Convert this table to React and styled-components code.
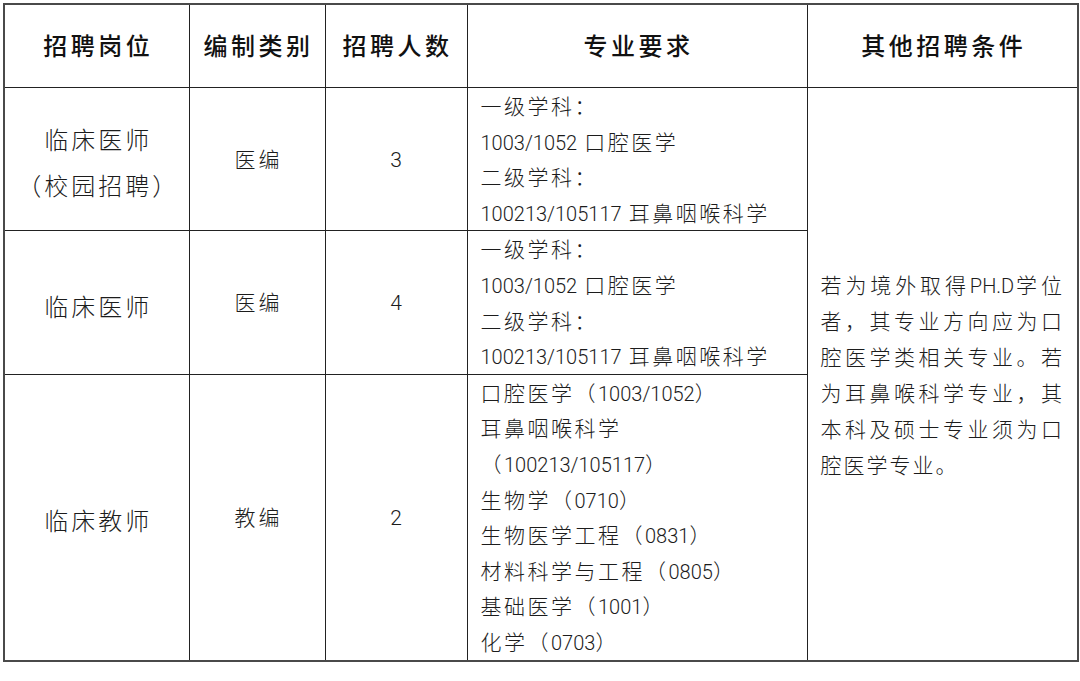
import styled, { createGlobalStyle } from "styled-components";

const GlobalStyle = createGlobalStyle`
  body {
    margin: 0;
    background: #fff;
    font-family: "Noto Sans CJK SC", "Noto Sans", sans-serif;
    color: #1c1c1c;
  }
`;

const Page = styled.div`
  padding: 3px 3px 0 3px;
  width: 1074px;
`;

const Table = styled.table`
  width: 1074px;
  border-collapse: collapse;
  table-layout: fixed;
  border: 2px solid #4a4a4a;
`;

const HeadCell = styled.th`
  height: 79px;
  border: 1px solid #222;
  font-size: 24px;
  font-weight: 500;
  letter-spacing: 3.5px;
  padding: 0 0 3px 3px;
  text-align: center;
  vertical-align: middle;
  color: #111;
`;

const Cell = styled.td`
  border: 1px solid #222;
  padding: ${({ $pad }) => $pad || "0"};
  text-align: ${({ $align }) => $align || "center"};
  vertical-align: middle;
  font-size: ${({ $size }) => $size || "21px"};
  font-weight: 300;
  letter-spacing: ${({ $spacing }) => $spacing || "2.5px"};
`;

const Line = styled.div`
  white-space: nowrap;
  height: ${({ $h }) => $h || "35.6px"};
  line-height: ${({ $h }) => $h || "35.6px"};
`;

const JustLine = styled.div`
  height: 36px;
  line-height: 36px;
  text-align: justify;
  text-align-last: ${({ $last }) => ($last ? "left" : "justify")};
  white-space: nowrap;
`;

const Num = styled.span`
  font-family: Roboto, "Liberation Sans", sans-serif;
  font-weight: 300;
  letter-spacing: 0;
  font-size: 20px;
  line-height: 1;
`;

const Count = styled.span`
  font-family: Roboto, "Liberation Sans", sans-serif;
  font-weight: 300;
  font-size: 21px;
  letter-spacing: 0;
`;

const rich = (s) =>
  s.split(/([0-9][0-9/.]*|PH\.D)/).map((part, i) =>
    i % 2 === 1 ? <Num key={i}>{part}</Num> : part
  );

const subjects = [
  "一级学科：",
  "1003/1052 口腔医学",
  "二级学科：",
  "100213/105117 耳鼻咽喉科学",
];

const teacherSubjects = [
  "口腔医学（1003/1052）",
  "耳鼻咽喉科学",
  "（100213/105117）",
  "生物学（0710）",
  "生物医学工程（0831）",
  "材料科学与工程（0805）",
  "基础医学（1001）",
  "化学（0703）",
];

const conditions = [
  "若为境外取得PH.D学位",
  "者，其专业方向应为口",
  "腔医学类相关专业。若",
  "为耳鼻喉科学专业，其",
  "本科及硕士专业须为口",
  "腔医学专业。",
];

const rows = [
  { post: ["临床医师", "（校园招聘）"], type: "医编", count: 3, majors: subjects },
  { post: ["临床医师"], type: "医编", count: 4, majors: subjects },
  { post: ["临床教师"], type: "教编", count: 2, majors: teacherSubjects },
];

export default function App() {
  return (
    <Page>
      <GlobalStyle />
      <Table>
        <colgroup>
          <col style={{ width: 185 }} />
          <col style={{ width: 136 }} />
          <col style={{ width: 142 }} />
          <col style={{ width: 340 }} />
          <col style={{ width: 271 }} />
        </colgroup>
        <thead>
          <tr>
            <HeadCell>招聘岗位</HeadCell>
            <HeadCell>编制类别</HeadCell>
            <HeadCell>招聘人数</HeadCell>
            <HeadCell>专业要求</HeadCell>
            <HeadCell>其他招聘条件</HeadCell>
          </tr>
        </thead>
        <tbody>
          {rows.map((row, i) => (
            <tr key={i}>
              <Cell $size="24px" $spacing="3px" $pad="6px 0 0 3px">
                {row.post.map((p) => (
                  <Line key={p} $h="46px">{p}</Line>
                ))}
              </Cell>
              <Cell $spacing="3px" $pad="0 0 3px 3px">{row.type}</Cell>
              <Cell $pad="0 0 3px 0">
                <Count>{row.count}</Count>
              </Cell>
              <Cell $align="left" $pad="0 0 0 13px">
                {row.majors.map((m) => (
                  <Line key={m}>{rich(m)}</Line>
                ))}
              </Cell>
              {i === 0 && (
                <Cell rowSpan={3} $align="left" $pad="0 13px 0 13px" $spacing="2px">
                  {conditions.map((c, k) => (
                    <JustLine key={c} $last={k === conditions.length - 1}>
                      {rich(c)}
                    </JustLine>
                  ))}
                </Cell>
              )}
            </tr>
          ))}
        </tbody>
      </Table>
    </Page>
  );
}
